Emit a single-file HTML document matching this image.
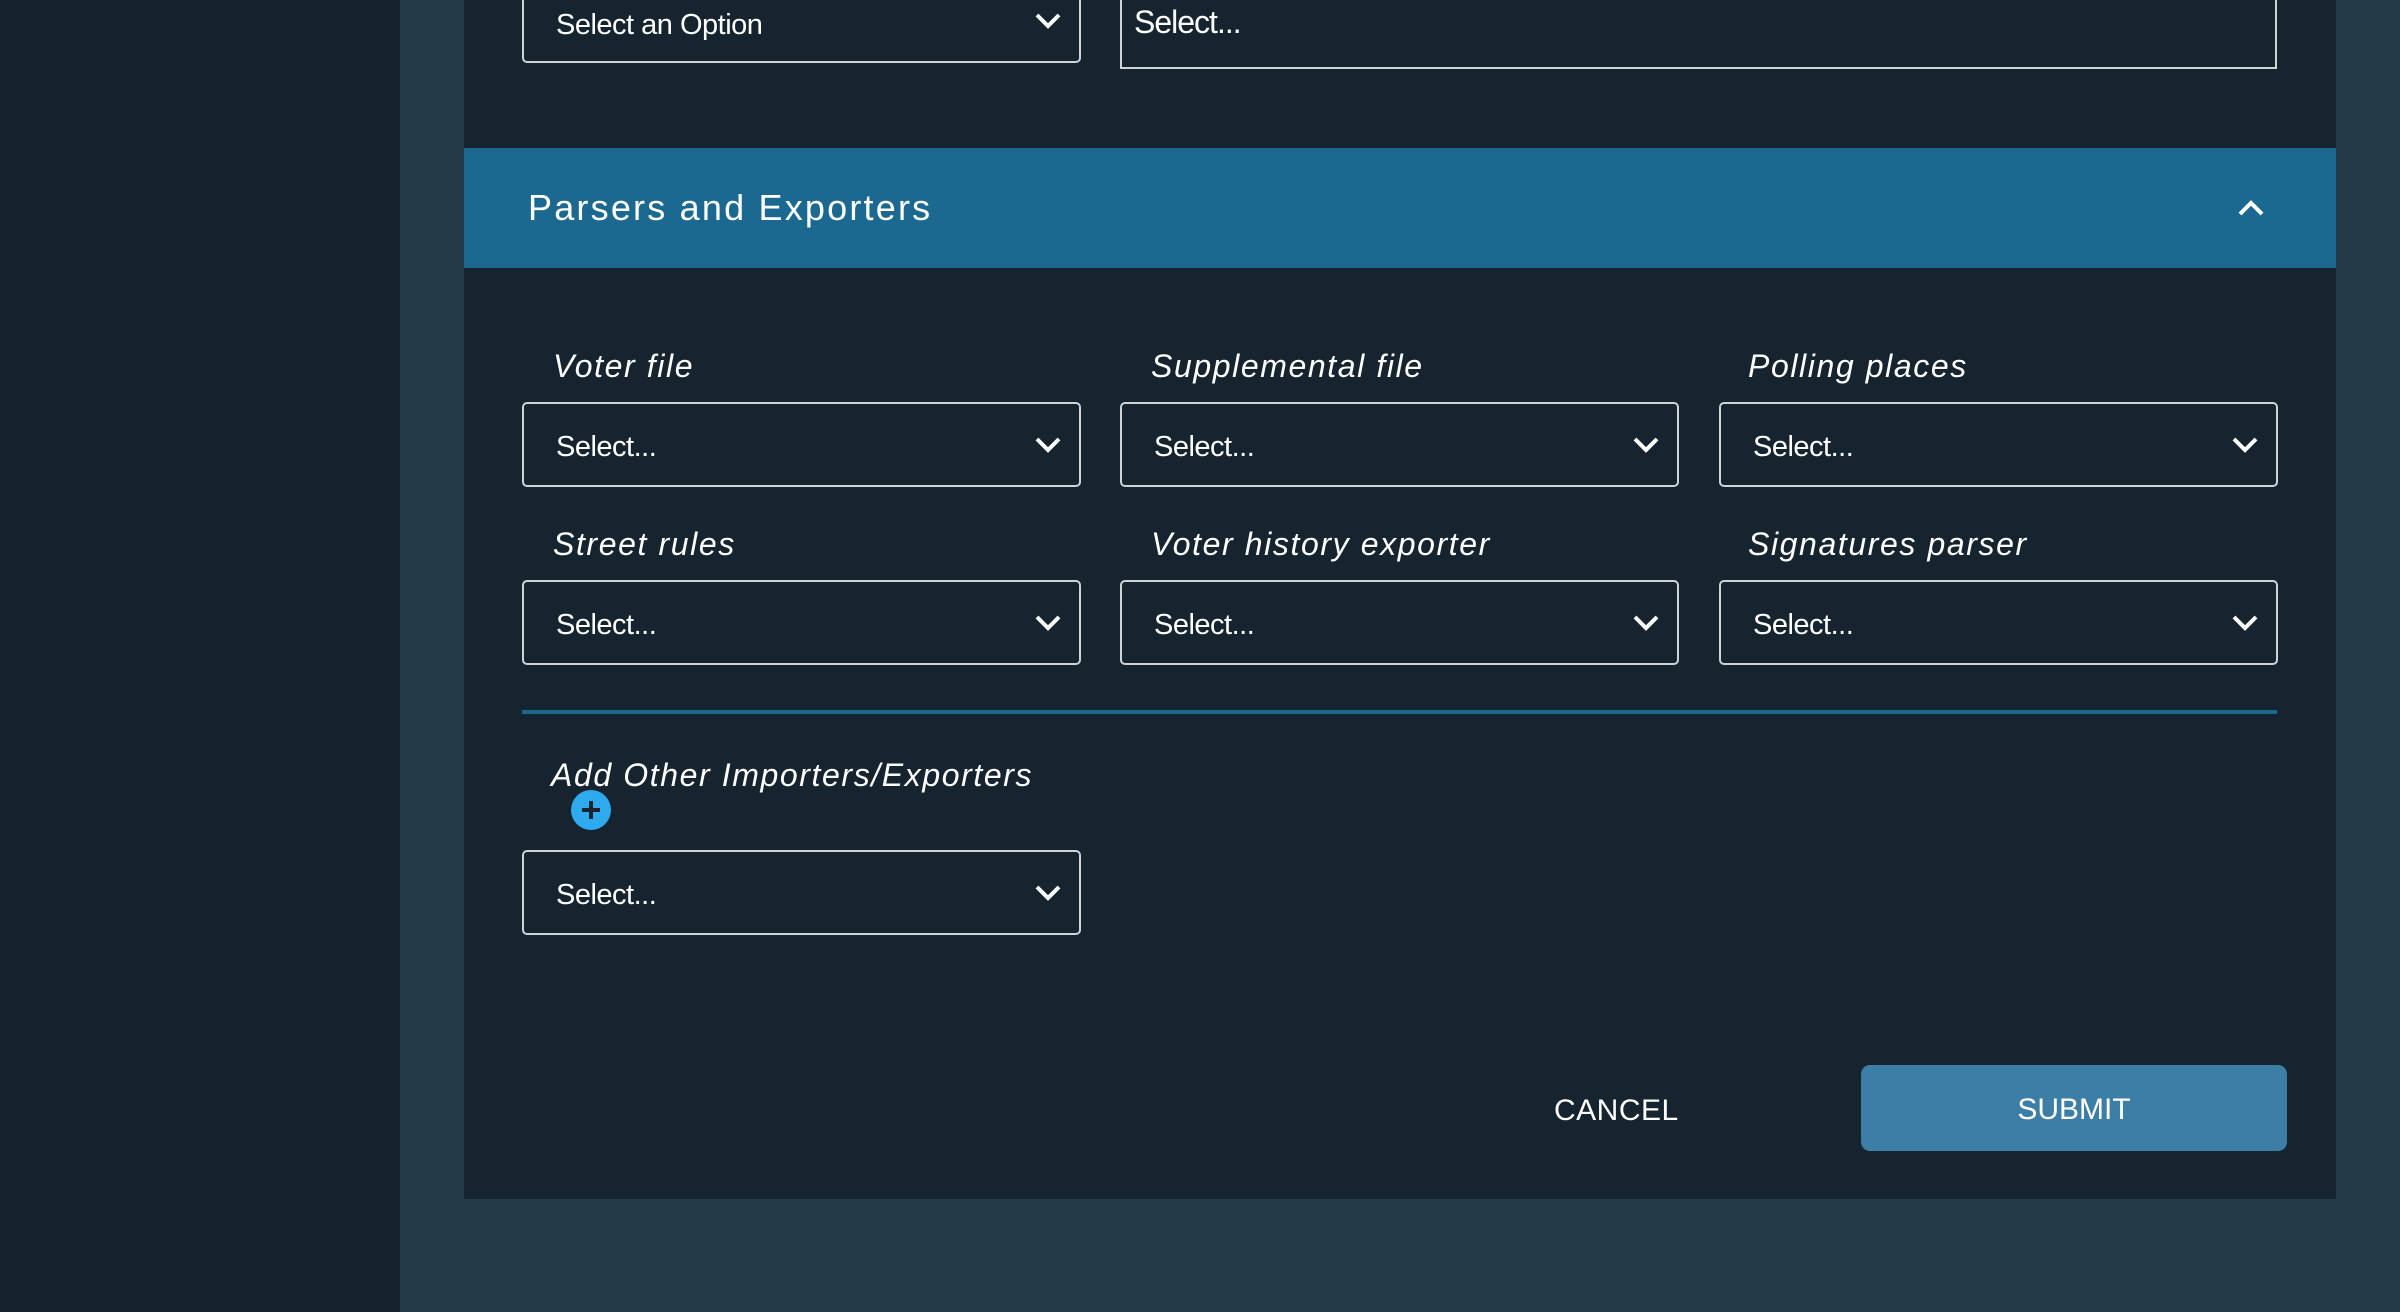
<!DOCTYPE html>
<html><head><meta charset="utf-8"><style>
*{margin:0;padding:0;box-sizing:border-box}
body{width:2400px;height:1312px;background:#243a49;font-family:"Liberation Sans",sans-serif;color:#fff;position:relative;overflow:hidden}
.side{position:absolute;left:0;top:0;width:400px;height:1312px;background:#15232d}
.panel{position:absolute;left:464px;top:0;width:1872px;height:1199px;background:#16242f}
.hdr{position:absolute;left:464px;top:148px;width:1872px;height:120px;background:#1b6990}
.hdr span{position:absolute;left:64px;top:39px;font-size:36px;letter-spacing:2.2px}
.sel{position:absolute;border:2px solid #cfd3d6;border-radius:5px;height:85px;width:559px}
.sel span{position:absolute;left:32px;top:27px;font-size:29px;letter-spacing:-.5px}
.sel svg{position:absolute;right:16px;top:31px}
.lbl{position:absolute;font-style:italic;font-size:32px;letter-spacing:1.6px}
</style></head><body>
<div class="side"></div>
<div class="panel"></div>
<div class="sel" style="left:522px;top:-22px"><span style="top:29px">Select an Option</span><svg width="30" height="20" viewBox="0 0 30 20" style="top:31px"><path d="M4 4 L15 15 L26 4" stroke="#fff" stroke-width="4" fill="none"/></svg></div>
<div style="position:absolute;left:1120px;top:-10px;width:1157px;height:79px;border:2px solid #cfd3d6;border-top:none"><span style="position:absolute;left:12px;top:14px;font-size:32px;letter-spacing:-1px">Select...</span></div>
<div class="hdr"><span>Parsers and Exporters</span><svg style="position:absolute;left:1772px;top:50px" width="30" height="20" viewBox="0 0 30 20"><path d="M4 16 L15 5 L26 16" stroke="#fff" stroke-width="4" fill="none"/></svg></div>

<div class="lbl" style="left:553px;top:348px">Voter file</div>
<div class="lbl" style="left:1151px;top:348px">Supplemental file</div>
<div class="lbl" style="left:1748px;top:348px">Polling places</div>
<div class="sel" style="left:522px;top:402px"><span>Select...</span><svg width="30" height="20" viewBox="0 0 30 20"><path d="M4 4 L15 15 L26 4" stroke="#fff" stroke-width="4" fill="none"/></svg></div>
<div class="sel" style="left:1120px;top:402px"><span>Select...</span><svg width="30" height="20" viewBox="0 0 30 20"><path d="M4 4 L15 15 L26 4" stroke="#fff" stroke-width="4" fill="none"/></svg></div>
<div class="sel" style="left:1719px;top:402px"><span>Select...</span><svg width="30" height="20" viewBox="0 0 30 20"><path d="M4 4 L15 15 L26 4" stroke="#fff" stroke-width="4" fill="none"/></svg></div>

<div class="lbl" style="left:553px;top:526px">Street rules</div>
<div class="lbl" style="left:1151px;top:526px">Voter history exporter</div>
<div class="lbl" style="left:1748px;top:526px">Signatures parser</div>
<div class="sel" style="left:522px;top:580px"><span>Select...</span><svg width="30" height="20" viewBox="0 0 30 20"><path d="M4 4 L15 15 L26 4" stroke="#fff" stroke-width="4" fill="none"/></svg></div>
<div class="sel" style="left:1120px;top:580px"><span>Select...</span><svg width="30" height="20" viewBox="0 0 30 20"><path d="M4 4 L15 15 L26 4" stroke="#fff" stroke-width="4" fill="none"/></svg></div>
<div class="sel" style="left:1719px;top:580px"><span>Select...</span><svg width="30" height="20" viewBox="0 0 30 20"><path d="M4 4 L15 15 L26 4" stroke="#fff" stroke-width="4" fill="none"/></svg></div>

<div style="position:absolute;left:522px;top:710px;width:1755px;height:4px;background:#1b6990"></div>
<div class="lbl" style="left:551px;top:757px">Add Other Importers/Exporters</div>
<svg style="position:absolute;left:571px;top:790px" width="40" height="40" viewBox="0 0 40 40"><circle cx="20" cy="20" r="20" fill="#2eaaee"/><path d="M20 11 V29 M11 20 H29" stroke="#16242f" stroke-width="4"/></svg>
<div class="sel" style="left:522px;top:850px"><span>Select...</span><svg width="30" height="20" viewBox="0 0 30 20"><path d="M4 4 L15 15 L26 4" stroke="#fff" stroke-width="4" fill="none"/></svg></div>

<div style="position:absolute;left:1554px;top:1094px;font-size:30px;letter-spacing:.5px">CANCEL</div>
<div style="position:absolute;left:1861px;top:1065px;width:426px;height:86px;background:#3d7ea6;border-radius:9px;text-align:center;line-height:90px;font-size:30px">SUBMIT</div>
</body></html>
